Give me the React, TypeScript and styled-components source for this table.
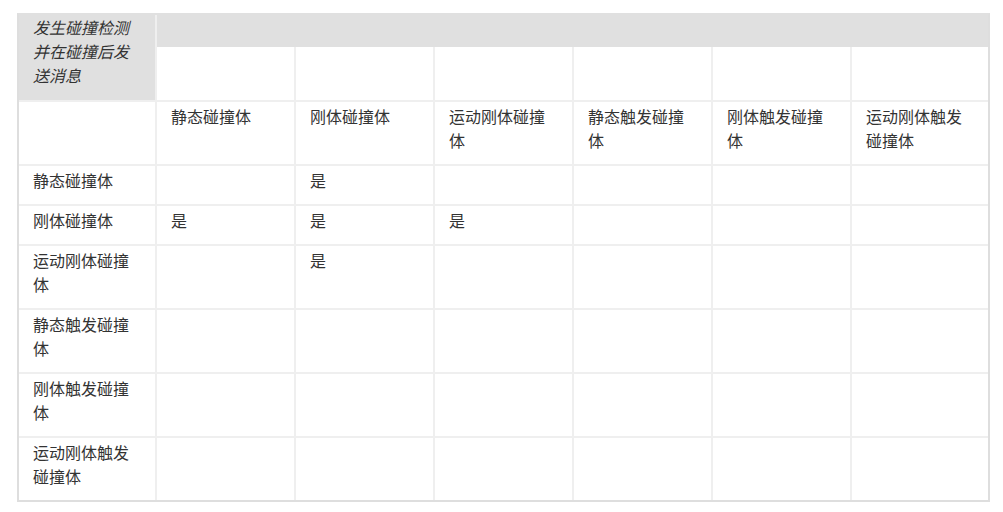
import React from "react";
import styled, { createGlobalStyle } from "styled-components";

const Global = createGlobalStyle`
  html, body { margin: 0; padding: 0; background: #fff; }
  body {
    font-family: "Noto Sans CJK SC", "Noto Sans", sans-serif;
    font-size: 16px;
    color: #333;
  }
`;

const Page = styled.div`
  padding: 13px 0 0 17px;
`;

const Table = styled.table`
  width: 973px;
  table-layout: fixed;
  border-collapse: separate;
  border-spacing: 0;
  border: 2px solid #dedede;
  border-top-color: #e0e0e0;
  line-height: 24px;
`;

const Corner = styled.th`
  background: #e0e0e0;
  font-weight: normal;
  font-style: italic;
  text-align: left;
  vertical-align: top;
  padding: 0 14px 0 14px;
  border-right: 2px solid #efefef;
  border-bottom: 2px solid #efefef;
  box-sizing: border-box;
`;

const Band = styled.td`
  background: #e0e0e0;
  height: 32px;
  padding: 0;
`;

const Cell = styled.td<{ $last?: boolean; $noBottom?: boolean }>`
  vertical-align: top;
  padding: 2px 14px 12px 14px;
  border-right: ${(p) => (p.$last ? "none" : "2px solid #efefef")};
  border-bottom: ${(p) => (p.$noBottom ? "none" : "2px solid #efefef")};
  word-break: break-all;
  box-sizing: border-box;
`;

const BlankCell = styled(Cell)`
  height: 55px;
  padding: 0;
`;

const HeadCell = styled(Cell).attrs({ as: "th" })`
  font-weight: normal;
  text-align: left;
`;

const kinds = [
  "静态碰撞体",
  "刚体碰撞体",
  "运动刚体碰撞体",
  "静态触发碰撞体",
  "刚体触发碰撞体",
  "运动刚体触发碰撞体",
];

const matrix: boolean[][] = [
  [false, true, false, false, false, false],
  [true, true, true, false, false, false],
  [false, true, false, false, false, false],
  [false, false, false, false, false, false],
  [false, false, false, false, false, false],
  [false, false, false, false, false, false],
];

const widths = [138, 139, 139, 139, 139, 139, 136];

export default function App() {
  return (
    <Page>
      <Global />
      <Table>
        <colgroup>
          {widths.map((w, i) => (
            <col key={i} style={{ width: w }} />
          ))}
        </colgroup>
        <thead>
          <tr>
            <Corner rowSpan={2}>发生碰撞检测并在碰撞后发送消息</Corner>
            <Band colSpan={6} />
          </tr>
          <tr>
            {kinds.map((k, i) => (
              <BlankCell key={k} $last={i === kinds.length - 1} />
            ))}
          </tr>
          <tr>
            <Cell />
            {kinds.map((k, i) => (
              <HeadCell key={k} $last={i === kinds.length - 1}>
                {k}
              </HeadCell>
            ))}
          </tr>
        </thead>
        <tbody>
          {kinds.map((row, r) => (
            <tr key={row}>
              <Cell $noBottom={r === kinds.length - 1}>{row}</Cell>
              {matrix[r].map((v, c) => (
                <Cell
                  key={c}
                  $last={c === kinds.length - 1}
                  $noBottom={r === kinds.length - 1}
                >
                  {v ? "是" : ""}
                </Cell>
              ))}
            </tr>
          ))}
        </tbody>
      </Table>
    </Page>
  );
}
